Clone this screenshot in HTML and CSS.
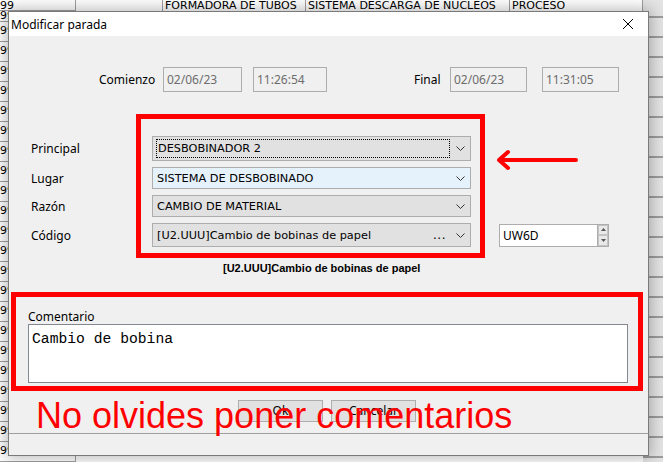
FILE: index.html
```html
<!DOCTYPE html>
<html lang="es">
<head>
<meta charset="utf-8">
<title>Modificar parada</title>
<link rel="stylesheet" href="styles.css">
</head>
<body>
<div class="desk">
  <div class="main">
    <div class="toprow">
      <div class="cell c0">99</div>
      <div class="cell c1"></div>
      <div class="cell c2">FORMADORA DE TUBOS</div>
      <div class="cell c3">SISTEMA DESCARGA DE NUCLEOS</div>
      <div class="cell c4">PROCESO</div>
    </div>
    <div class="lrow first"><span>99</span></div>
    <div class="lrow"><span>99</span></div>
    <div class="lrow"><span>99</span></div>
    <div class="lrow"><span>99</span></div>
    <div class="lrow"><span>99</span></div>
    <div class="lrow"><span>99</span></div>
    <div class="lrow"><span>99</span></div>
    <div class="lrow"><span>99</span></div>
    <div class="lrow"><span>99</span></div>
    <div class="lrow"><span>99</span></div>
    <div class="lrow"><span>99</span></div>
    <div class="lrow"><span>99</span></div>
    <div class="lrow"><span>99</span></div>
    <div class="lrow"><span>99</span></div>
    <div class="lrow"><span>99</span></div>
    <div class="lrow"><span>99</span></div>
    <div class="lrow"><span>99</span></div>
    <div class="lrow"><span>99</span></div>
    <div class="lrow"><span>99</span></div>
    <div class="lrow"><span>99</span></div>
    <div class="lrow"><span>99</span></div>
    <div class="lrow"><span>99</span></div>
    <div class="lrow"><span>99</span></div>
  </div>
  <div class="strip">
    <div class="srow first"></div>
    <div class="srow"></div><div class="srow"></div><div class="srow"></div><div class="srow"></div>
    <div class="srow"></div><div class="srow"></div><div class="srow"></div><div class="srow"></div>
    <div class="srow"></div><div class="srow"></div><div class="srow"></div><div class="srow"></div>
    <div class="srow"></div><div class="srow"></div><div class="srow"></div><div class="srow"></div>
    <div class="srow"></div><div class="srow"></div><div class="srow"></div><div class="srow"></div>
    <div class="srow"></div><div class="srow"></div>
  </div>
</div>

<div class="dialog">
  <div class="titlebar">
    <span class="title">Modificar parada</span>
    <svg class="close" width="12" height="12" viewBox="0 0 12 12"><path d="M1 1 L11 11 M11 1 L1 11" stroke="#000" stroke-width="1" fill="none"/></svg>
  </div>
  <div class="body">
    <div class="timerow">
      <span class="lbl l-comienzo">Comienzo</span>
      <div class="tbox d1">02/06/23</div>
      <div class="tbox t1">11:26:54</div>
      <span class="lbl l-final">Final</span>
      <div class="tbox d2">02/06/23</div>
      <div class="tbox t2">11:31:05</div>
    </div>

    <div class="fields">
      <div class="frow r-principal">
        <span class="lbl flabel">Principal</span>
        <div class="combo">
          <span class="focusrect">DESBOBINADOR 2</span>
          <svg class="chev" width="9" height="5" viewBox="0 0 9 5"><path d="M0.5 0.5 L4.5 4.5 L8.5 0.5" stroke="#333" fill="none"/></svg>
        </div>
      </div>
      <div class="frow r-lugar">
        <span class="lbl flabel">Lugar</span>
        <div class="combo hover">
          <span class="ctext">SISTEMA DE DESBOBINADO</span>
          <svg class="chev" width="9" height="5" viewBox="0 0 9 5"><path d="M0.5 0.5 L4.5 4.5 L8.5 0.5" stroke="#333" fill="none"/></svg>
        </div>
      </div>
      <div class="frow r-razon">
        <span class="lbl flabel">Razón</span>
        <div class="combo">
          <span class="ctext">CAMBIO DE MATERIAL</span>
          <svg class="chev" width="9" height="5" viewBox="0 0 9 5"><path d="M0.5 0.5 L4.5 4.5 L8.5 0.5" stroke="#333" fill="none"/></svg>
        </div>
      </div>
      <div class="frow r-codigo">
        <span class="lbl flabel">Código</span>
        <div class="combo">
          <span class="ctext">[U2.UUU]Cambio de bobinas de papel</span>
          <span class="dots">...</span>
          <svg class="chev" width="9" height="5" viewBox="0 0 9 5"><path d="M0.5 0.5 L4.5 4.5 L8.5 0.5" stroke="#333" fill="none"/></svg>
        </div>
        <div class="spin">
          <div class="spinval">UW6D</div>
          <div class="spinbtns">
            <div class="sb"><svg width="5" height="3" viewBox="0 0 5 3"><path d="M0 3 L2.5 0 L5 3 Z" fill="#555"/></svg></div>
            <div class="sb"><svg width="5" height="3" viewBox="0 0 5 3"><path d="M0 0 L2.5 3 L5 0 Z" fill="#555"/></svg></div>
          </div>
        </div>
      </div>
    </div>

    <div class="sublabel">[U2.UUU]Cambio de bobinas de papel</div>

    <div class="comment">
      <span class="lbl clabel">Comentario</span>
      <div class="textarea">Cambio de bobina</div>
    </div>

    <div class="buttons">
      <div class="btn">Ok</div>
      <div class="btn">Cancelar</div>
    </div>
  </div>
  <div class="status"></div>

  <div class="redbox box1"></div>
  <div class="redbox box2"></div>
  <svg class="arrow" width="84" height="24" viewBox="0 0 84 24">
    <path d="M80 12 L4 12 M12 4 L3 12 L12 20" stroke="#ff0000" stroke-width="4" stroke-linecap="round" stroke-linejoin="round" fill="none"/>
  </svg>
  <div class="bigtext">No olvides poner comentarios</div>
</div>
</body>
</html>
```

FILE: styles.css
```css
html, body {
  margin: 0;
  padding: 0;
}
body {
  width: 663px;
  height: 462px;
  overflow: hidden;
  background: #ffffff;
  position: relative;
  font-family: "DejaVu Sans", sans-serif;
}

/* ---------- background grid ---------- */
.desk {
  display: flex;
  width: 663px;
  height: 462px;
}
.main {
  width: 643px;
  display: flex;
  flex-direction: column;
}
.toprow {
  display: flex;
  height: 11px;
  flex: none;
}
.cell {
  height: 11px;
  line-height: 11px;
  font-size: 11px;
  color: #000;
  white-space: nowrap;
  overflow: hidden;
  border-right: 1px solid #a0a0a0;
  box-sizing: border-box;
  padding-left: 2px;
}
.c0 { width: 76px; padding-left: 0; border-bottom: 1px solid #a0a0a0; }
.c1 { width: 87px; }
.c2 { width: 143px; }
.c3 { width: 204px; }
.c4 { width: 133px; }
.lrow {
  height: 20px;
  flex: none;
  width: 76px;
  box-sizing: border-box;
  border-bottom: 1px solid #a0a0a0;
  border-right: 1px solid #a0a0a0;
  font-size: 11px;
  line-height: 14px;
  padding-top: 2px;
  overflow: hidden;
}
.lrow.first { height: 11px; padding-top: 0; line-height: 10px; }

.strip {
  width: 20px;
  background: #e4e4e4;
  display: flex;
  flex-direction: column;
}
.srow {
  height: 20px;
  flex: none;
  box-sizing: border-box;
  border-bottom: 2px solid #9c9c9c;
}
.srow.first { height: 18px; }

/* ---------- dialog window ---------- */
.dialog {
  position: absolute;
  left: 8px;
  top: 11px;
  width: 641px;
  height: 445px;
  box-sizing: border-box;
  border: 1px solid #7a7a7a;
  background: #f0f0f0;
  box-shadow: 0 0 14px 2px rgba(0, 0, 0, 0.28);
  display: flex;
  flex-direction: column;
}
.titlebar {
  height: 24px;
  flex: none;
  background: #ffffff;
  display: flex;
  align-items: center;
  justify-content: space-between;
  padding: 0 14px 0 2px;
}
.title {
  font-family: "Noto Sans", sans-serif;
  font-size: 12px;
  color: #000;
}
.close { display: block; }

.body {
  height: 397px;
  flex: none;
  box-sizing: border-box;
  padding-top: 31px;
  display: flex;
  flex-direction: column;
}
.lbl {
  font-family: "Noto Sans", sans-serif;
  font-size: 12px;
  color: #000;
  white-space: nowrap;
}

.timerow {
  display: flex;
  align-items: center;
  height: 25px;
}
.l-comienzo { margin-left: 90px; width: 56px; }
.l-final { margin-left: 87px; width: 27px; }
.tbox {
  height: 25px;
  box-sizing: border-box;
  border: 1px solid #adadad;
  background: #f0f0f0;
  color: #6d6d6d;
  font-family: "Noto Sans", sans-serif;
  font-size: 12px;
  line-height: 23px;
  padding-left: 3px;
}
.d1 { margin-left: 8px; width: 79px; }
.t1 { margin-left: 11px; width: 74px; }
.d2 { margin-left: 9px; width: 77px; }
.t2 { margin-left: 15px; width: 77px; }

.fields {
  margin-top: 44px;
  display: flex;
  flex-direction: column;
  gap: 6px;
}
.frow {
  display: flex;
  align-items: center;
}
.flabel {
  width: 121px;
  margin-left: 22px;
}
.combo {
  width: 319px;
  height: 22px;
  box-sizing: border-box;
  border: 1px solid #adadad;
  background: #e1e1e1;
  display: flex;
  align-items: center;
  padding: 0 5px 0 3px;
  font-size: 11.3px;
  color: #000;
  white-space: nowrap;
}
.combo.hover { background: #e5f1fb; }
.r-principal .combo { height: 25px; }
.r-codigo .combo { height: 24px; }
.focusrect {
  flex: 1;
  height: 19px;
  line-height: 18px;
  box-sizing: border-box;
  border: 1px dotted #000;
  padding-left: 1px;
  margin-right: 6px;
}
.ctext {
  flex: 1;
  padding-left: 1px;
}
.dots {
  margin-right: 10px;
  font-size: 12px;
  letter-spacing: 0.5px;
}
.chev { flex: none; }

.spin {
  margin-left: 28px;
  display: flex;
  height: 23px;
}
.spinval {
  width: 98px;
  height: 23px;
  box-sizing: border-box;
  border: 1px solid #adadad;
  border-right: none;
  background: #fff;
  font-family: "Noto Sans", sans-serif;
  font-size: 12px;
  line-height: 21px;
  padding-left: 3px;
  color: #000;
}
.spinbtns {
  width: 12px;
  display: flex;
  flex-direction: column;
  border: 1px solid #adadad;
  box-sizing: border-box;
  background: #fff;
}
.sb {
  flex: 1;
  background: #e9e9e9;
  border: 1px solid #c4c4c4;
  display: flex;
  align-items: center;
  justify-content: center;
}
.sb svg { display: block; }

.sublabel {
  margin-top: 14px;
  margin-left: 214px;
  height: 14px;
  line-height: 14px;
  font-family: "Liberation Sans", sans-serif;
  font-weight: bold;
  font-size: 11px;
  color: #000;
}

.comment {
  margin-top: 35px;
  margin-left: 19px;
  display: flex;
  flex-direction: column;
}
.clabel {
  height: 14px;
  line-height: 14px;
}
.textarea {
  width: 600px;
  height: 59px;
  box-sizing: border-box;
  border: 1px solid #828790;
  background: #fff;
  font-family: "Liberation Mono", monospace;
  font-size: 14.7px;
  line-height: 18px;
  padding: 5px 3px;
  color: #000;
}

.buttons {
  margin-top: 17px;
  margin-left: 229px;
  display: flex;
  gap: 8px;
}
.btn {
  width: 85px;
  height: 22px;
  box-sizing: border-box;
  border: 1px solid #adadad;
  background: #e1e1e1;
  font-family: "Noto Sans", sans-serif;
  font-size: 12px;
  line-height: 20px;
  text-align: center;
  color: #000;
}

.status {
  flex: 1;
  border-top: 1px solid #a0a0a0;
  background: #f0f0f0;
}

/* ---------- annotations (overlay) ---------- */
.redbox {
  position: absolute;
  box-sizing: border-box;
  border: 5px solid #ff0000;
}
.box1 { left: 127px; top: 102px; width: 349px; height: 144px; }
.box2 { left: 2px; top: 280px; width: 632px; height: 99px; }
.arrow {
  position: absolute;
  left: 487px;
  top: 136px;
}
.bigtext {
  position: absolute;
  left: 27px;
  top: 386px;
  font-family: "Liberation Sans", sans-serif;
  font-size: 36px;
  line-height: 36px;
  color: #ff0000;
  white-space: nowrap;
}
```
